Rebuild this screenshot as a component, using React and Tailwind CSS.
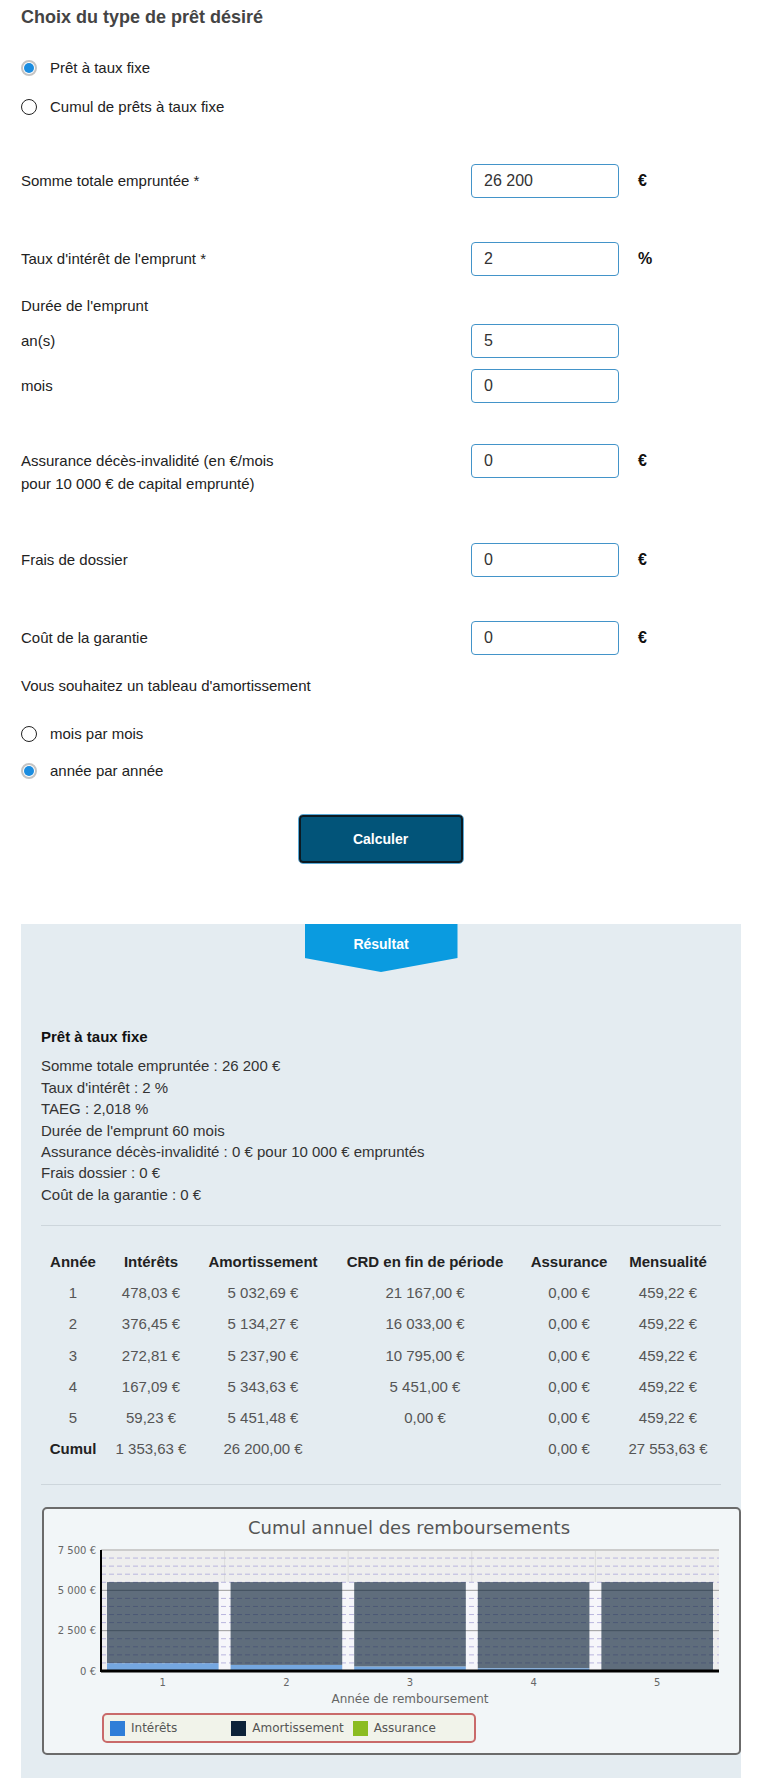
import React from 'react';

const interets = [478.03, 376.45, 272.81, 167.09, 59.23];
const amortissements = [5032.69, 5134.27, 5237.9, 5343.63, 5451.48];

const rows = [
    ['1', '478,03 €', '5 032,69 €', '21 167,00 €', '0,00 €', '459,22 €'],
    ['2', '376,45 €', '5 134,27 €', '16 033,00 €', '0,00 €', '459,22 €'],
    ['3', '272,81 €', '5 237,90 €', '10 795,00 €', '0,00 €', '459,22 €'],
    ['4', '167,09 €', '5 343,63 €', '5 451,00 €', '0,00 €', '459,22 €'],
    ['5', '59,23 €', '5 451,48 €', '0,00 €', '0,00 €', '459,22 €'],
];

const Radio = ({ checked, label, className = '' }) => (
    <div className={`flex items-center h-[24px] ${className}`}>
        {checked ? (
            <span className="w-[16px] h-[16px] rounded-full border-2 border-[#c4c4c4] bg-white flex items-center justify-center">
                <span className="w-[10px] h-[10px] rounded-full bg-[#1b8de0]" />
            </span>
        ) : (
            <span className="w-[16px] h-[16px] rounded-full border-[1.5px] border-[#222] bg-white" />
        )}
        <span className="ml-[13px] text-[15px] text-[#222]">{label}</span>
    </div>
);

const Field = ({ label, value, unit, className = '', top = false }) => (
    <div className={`flex ${top ? 'items-start' : 'items-center'} ${className}`}>
        <div className={`w-[450px] text-[15px] text-[#222] ${top ? 'pt-[5px] leading-[23px]' : ''}`}>{label}</div>
        <input
            readOnly
            defaultValue={value}
            className="w-[148px] h-[34px] border border-[#4394c9] rounded-[4px] pl-[12px] text-[16px] text-[#333] bg-white outline-none"
        />
        {unit && <span className={`ml-[19px] font-bold text-[16px] text-[#111] ${top ? 'leading-[34px]' : ''}`}>{unit}</span>}
    </div>
);

// Graphique : cumul annuel
const Chart = () => {
    const left = 57, right = 675, top = 41, bottom = 162;
    const y = (v) => bottom - (v / 7500) * (bottom - top);
    const cw = (right - left) / 5;
    const minors = [];
    for (let v = 500; v < 7500; v += 500) {
        if (v % 2500 !== 0) minors.push(v);
    }

    return (
        <svg width="694" height="204" className="block font-['DejaVu_Sans',Verdana,sans-serif]">
            <text x="365" y="25" textAnchor="middle" fontSize="18" fill="#555">Cumul annuel des remboursements</text>

            <rect x={left} y={top} width={right - left} height={bottom - top} fill="#eeeeee" />
            {[1, 2, 3, 4].map((k) => (
                <line key={k} x1={left + k * cw} x2={left + k * cw} y1={top} y2={bottom} stroke="#dcdcdc" />
            ))}
            {[1, 2, 3, 4].map((k) => (
                <rect key={k} x={left + k * cw - 6} y={y(5510.72)} width="12" height={bottom - y(5510.72)} fill="#f6f6fa" />
            ))}
            {minors.map((v) => (
                <line key={v} x1={left} x2={right} y1={y(v)} y2={y(v)} stroke="#b9b5de" strokeDasharray="5,3" />
            ))}
            {[2500, 5000].map((v) => (
                <line key={v} x1={left} x2={right} y1={y(v)} y2={y(v)} stroke="#9a9a9a" />
            ))}
            <line x1={left} x2={right} y1={top} y2={top} stroke="#cccccc" strokeWidth="2" />

            {interets.map((it, k) => {
                const x = left + k * cw + 6;
                const total = it + amortissements[k];
                return (
                    <g key={k} opacity="0.63">
                        <rect x={x} y={y(total)} width={cw - 12} height={y(it) - y(total)} fill="#0d233a" />
                        <rect x={x} y={y(it)} width={cw - 12} height={bottom - y(it)} fill="#2f7ed8" />
                    </g>
                );
            })}

            <line x1={left} x2={left} y1={top} y2={bottom + 1} stroke="#000" strokeWidth="2" />
            <line x1={left} x2={right} y1={bottom} y2={bottom} stroke="#000" strokeWidth="3" />

            {[['7 500 €', 7500], ['5 000 €', 5000], ['2 500 €', 2500], ['0 €', 0]].map(([t, v]) => (
                <text key={t} x="52" y={y(v) + 3.5} textAnchor="end" fontSize="10" fill="#666">{t}</text>
            ))}
            {[1, 2, 3, 4, 5].map((n, k) => (
                <text key={n} x={left + k * cw + cw / 2} y="176.5" textAnchor="middle" fontSize="10" fill="#666">{n}</text>
            ))}
            <text x={(left + right) / 2} y="194" textAnchor="middle" fontSize="12" fill="#666">Année de remboursement</text>
        </svg>
    );
};

const LegendItem = ({ color, label }) => (
    <div className="w-[122px] flex items-center">
        <span className="w-[15px] h-[15px]" style={{ backgroundColor: color }} />
        <span className="ml-[6px] text-[12px] text-[#555]">{label}</span>
    </div>
);

const App = () => {
    return (
        <div className="w-[760px] bg-white font-['Liberation_Sans',Arial,sans-serif] text-[#222]">
            <div className="px-[21px] flex flex-col">
                <h2 className="mt-[5px] h-[24px] leading-[24px] text-[18px] font-bold text-[#444]">Choix du type de prêt désiré</h2>

                <Radio checked label="Prêt à taux fixe" className="mt-[27px]" />
                <Radio label="Cumul de prêts à taux fixe" className="mt-[15px]" />

                <Field label="Somme totale empruntée *" value="26 200" unit="€" className="mt-[45px]" />
                <Field label="Taux d'intérêt de l'emprunt *" value="2" unit="%" className="mt-[44px]" />

                <div className="mt-[20px] h-[20px] leading-[20px] text-[15px]">Durée de l'emprunt</div>
                <Field label="an(s)" value="5" className="mt-[8px]" />
                <Field label="mois" value="0" className="mt-[11px]" />

                <Field
                    top
                    label={<>Assurance décès-invalidité (en €/mois<br />pour 10 000 € de capital emprunté)</>}
                    value="0"
                    unit="€"
                    className="mt-[41px]"
                />
                <Field label="Frais de dossier" value="0" unit="€" className="mt-[48px]" />
                <Field label="Coût de la garantie" value="0" unit="€" className="mt-[44px]" />

                <div className="mt-[21px] h-[20px] leading-[20px] text-[15px]">Vous souhaitez un tableau d'amortissement</div>
                <Radio label="mois par mois" className="mt-[26px]" />
                <Radio checked label="année par année" className="mt-[13px]" />

                <div className="mt-[31px] flex justify-center">
                    <button className="ml-[1px] w-[166px] h-[50px] rounded-[5px] border border-[#5aa9d6] p-0 bg-white">
                        <span className="w-full h-full rounded-[4px] border-2 border-[#0b1a22] bg-[#025479] text-white font-bold text-[14px] flex items-center justify-center">
                            Calculer
                        </span>
                    </button>
                </div>
            </div>

            <div className="ml-[21px] w-[720px] mt-[76px] bg-[#e4ecf1] px-[20px] pb-[23px]">
                <div
                    className="mx-auto -mt-[16px] w-[153px] h-[48px] bg-[#0a9be0] text-white font-bold text-[14px] leading-[18px] pt-[11px] text-center"
                    style={{ clipPath: 'polygon(0 0, 100% 0, 100% 71%, 50% 100%, 0 71%)' }}
                >
                    Résultat
                </div>

                <div className="mt-[54px] text-[15px] leading-[21.4px]">
                    <div className="font-bold text-[#111]">Prêt à taux fixe</div>
                    <div className="mt-[8px] text-[#333]">
                        <div>Somme totale empruntée : 26 200 €</div>
                        <div>Taux d'intérêt : 2 %</div>
                        <div>TAEG : 2,018 %</div>
                        <div>Durée de l'emprunt 60 mois</div>
                        <div>Assurance décès-invalidité : 0 € pour 10 000 € empruntés</div>
                        <div>Frais dossier : 0 €</div>
                        <div>Coût de la garantie : 0 €</div>
                    </div>
                </div>

                <div className="mt-[20px] border-t border-[#cdd6dc]" />

                <div className="mt-[20px] text-[15px]">
                    <div className="grid grid-cols-[64px_92px_132px_192px_96px_102px] h-[31.3px] items-center text-center font-bold text-[#222]">
                        <div>Année</div>
                        <div>Intérêts</div>
                        <div>Amortissement</div>
                        <div>CRD en fin de période</div>
                        <div>Assurance</div>
                        <div>Mensualité</div>
                    </div>
                    {rows.map((r) => (
                        <div key={r[0]} className="grid grid-cols-[64px_92px_132px_192px_96px_102px] h-[31.3px] items-center text-center text-[#555]">
                            {r.map((c, i) => (
                                <div key={i}>{c}</div>
                            ))}
                        </div>
                    ))}
                    <div className="grid grid-cols-[64px_92px_132px_192px_96px_102px] h-[31.3px] items-center text-center text-[#555]">
                        <div className="font-bold text-[#222]">Cumul</div>
                        <div>1 353,63 €</div>
                        <div>26 200,00 €</div>
                        <div />
                        <div>0,00 €</div>
                        <div>27 553,63 €</div>
                    </div>
                </div>

                <div className="mt-[19px] border-t border-[#cdd6dc]" />

                <div className="mt-[22px] ml-[1px] -mr-[20px] border-2 border-[#6b6b6b] rounded-[5px] bg-[#f2f6f8] pb-[10px]">
                    <Chart />
                    <div className="ml-[58px] w-[374px] h-[30px] border-2 border-[#c96a6a] rounded-[5px] bg-[#f1f3ea] flex items-center pl-[6px] font-['DejaVu_Sans',Verdana,sans-serif]">
                        <LegendItem color="#2f7ed8" label="Intérêts" />
                        <LegendItem color="#0d233a" label="Amortissement" />
                        <LegendItem color="#8bbc21" label="Assurance" />
                    </div>
                </div>
            </div>
        </div>
    );
};

export default App;
